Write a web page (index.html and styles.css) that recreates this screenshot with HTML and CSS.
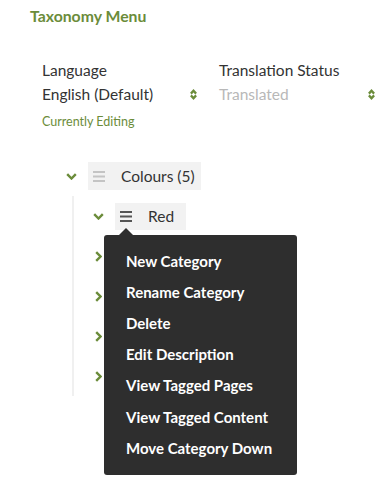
FILE: index.html
```html
<!DOCTYPE html>
<html lang="en">
<head>
    <meta charset="UTF-8">
    <meta name="viewport" content="width=device-width, initial-scale=1.0">
    <title>Taxonomy Menu</title>
    <link rel="stylesheet" href="styles.css">
</head>
<body>
    <div class="panel">
        <h1 class="title">Taxonomy Menu</h1>

        <!-- Language / translation -->
        <div class="fields">
            <div class="field">
                <label>Language</label>
                <div class="select">
                    <span>English (Default)</span>
                    <svg class="sort" width="7" height="11" viewBox="0 0 7 11"><path d="M0.9 4.6 L3.5 1.8 L6.1 4.6 M0.9 6.4 L3.5 9.2 L6.1 6.4"/></svg>
                </div>
                <div class="hint">Currently Editing</div>
            </div>
            <div class="field wide">
                <label>Translation Status</label>
                <div class="select muted">
                    <span>Translated</span>
                    <svg class="sort" width="7" height="11" viewBox="0 0 7 11"><path d="M0.9 4.6 L3.5 1.8 L6.1 4.6 M0.9 6.4 L3.5 9.2 L6.1 6.4"/></svg>
                </div>
            </div>
        </div>

        <!-- Tree -->
        <div class="tree">
            <div class="row">
                <span class="toggle"><svg width="11" height="7" viewBox="0 0 11 7"><path d="M1.2 1.2 L5.5 5.5 L9.8 1.2"/></svg></span>
                <div class="node">
                    <svg class="grip light" width="12" height="11" viewBox="0 0 12 11"><rect y="0" width="12" height="2"/><rect y="4.5" width="12" height="2"/><rect y="9" width="12" height="2"/></svg>
                    <span>Colours (5)</span>
                </div>
            </div>
            <div class="children">
                <div class="row">
                    <span class="toggle"><svg width="11" height="7" viewBox="0 0 11 7"><path d="M1.2 1.2 L5.5 5.5 L9.8 1.2"/></svg></span>
                    <div class="node red">
                        <svg class="grip" width="12" height="11" viewBox="0 0 12 11"><rect y="0" width="12" height="2"/><rect y="4.5" width="12" height="2"/><rect y="9" width="12" height="2"/></svg>
                        <span>Red</span>
                        <ul class="menu">
                            <li>New Category</li>
                            <li>Rename Category</li>
                            <li>Delete</li>
                            <li>Edit Description</li>
                            <li>View Tagged Pages</li>
                            <li>View Tagged Content</li>
                            <li>Move Category Down</li>
                        </ul>
                    </div>
                </div>
                <div class="row">
                    <span class="toggle"><svg width="7" height="11" viewBox="0 0 7 11"><path d="M1.2 1.2 L5.5 5.5 L1.2 9.8"/></svg></span>
                </div>
                <div class="row">
                    <span class="toggle"><svg width="7" height="11" viewBox="0 0 7 11"><path d="M1.2 1.2 L5.5 5.5 L1.2 9.8"/></svg></span>
                </div>
                <div class="row">
                    <span class="toggle"><svg width="7" height="11" viewBox="0 0 7 11"><path d="M1.2 1.2 L5.5 5.5 L1.2 9.8"/></svg></span>
                </div>
                <div class="row">
                    <span class="toggle"><svg width="7" height="11" viewBox="0 0 7 11"><path d="M1.2 1.2 L5.5 5.5 L1.2 9.8"/></svg></span>
                </div>
            </div>
        </div>
    </div>
</body>
</html>
```

FILE: styles.css
```css
* {
    margin: 0;
    padding: 0;
    box-sizing: border-box;
}

html, body {
    min-height: 100%;
}

body {
    min-height: 100vh;
    background: #ffffff;
    font-family: "Lato", "Liberation Sans", sans-serif;
    font-size: 15.5px;
    line-height: 18px;
    color: #333333;
}

.panel {
    min-height: 499px;
    padding: 7px 0 0 30px;
}

.title {
    font-size: 15.8px;
    font-weight: bold;
    line-height: 18px;
    color: #6b8c3a; /* vert olive */
}

.fields {
    display: flex;
    gap: 22px;
    margin-top: 36px;
    padding-left: 12px;
}

.field {
    width: 155px;
    display: flex;
    flex-direction: column;
}

.field.wide {
    width: 156px;
}

label {
    display: block;
    height: 18px;
}

.select {
    display: flex;
    justify-content: space-between;
    align-items: center;
    margin-top: 6px;
    height: 18px;
}

.select.muted {
    color: #b8b8b8;
}

.sort path {
    fill: none;
    stroke: #6b8c3a;
    stroke-width: 2.3;
}

.hint {
    margin-top: 11px;
    font-size: 12.5px;
    line-height: 15px;
    color: #6b8c3a;
}

.tree {
    margin-top: 27px;
    padding-left: 36px;
}

.row {
    display: flex;
    align-items: center;
    gap: 11px;
    height: 40px;
}

.toggle {
    width: 11px;
    display: flex;
    justify-content: center;
}

.toggle path {
    fill: none;
    stroke: #6b8c3a;
    stroke-width: 2.4;
}

.node {
    position: relative;
    display: flex;
    align-items: center;
    gap: 16px;
    height: 28px;
    padding: 0 6px 0 5px;
    background: #f2f2f2;
}

.node.red {
    height: 27px;
    min-width: 71px;
}

.grip rect {
    fill: #c4c4c4;
}

.node.red .grip rect {
    fill: #555555;
}

.children {
    margin-left: 6px;
    padding-left: 19px;
    border-left: 2px solid #f0f0f0;
}

/* Menu contextuel */
.menu {
    position: absolute;
    top: 32px;
    left: -11px;
    width: 193px;
    padding: 11px 0 11px 22px;
    list-style: none;
    background: #2e2e2e;
    border-radius: 3px;
    z-index: 2;
}

.menu::before {
    content: "";
    position: absolute;
    top: -7px;
    left: 15px;
    border-left: 7px solid transparent;
    border-right: 7px solid transparent;
    border-bottom: 7px solid #2e2e2e;
}

.menu li {
    font-size: 15px;
    line-height: 31.2px;
    font-weight: bold;
    color: #ffffff;
    white-space: nowrap;
}
```
